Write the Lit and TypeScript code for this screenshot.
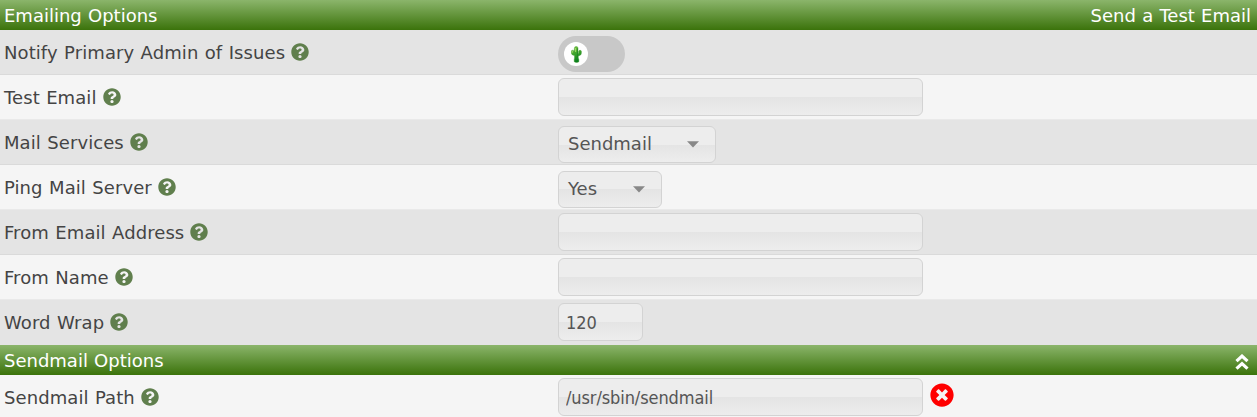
import { LitElement, html, svg, css, nothing, TemplateResult } from "lit";
import { customElement } from "lit/decorators.js";

const helpIcon = html`<svg class="help" viewBox="0 0 512 512" aria-label="Help">
  <path d="M504 256c0 137-111 248-248 248S8 393 8 256C8 119.100 119 8 256 8s248 111.100 248 248zM262.700 90c-54.500 0-89.300 23-116.500 63.800-3.500 5.300-2.400 12.400 2.700 16.300l34.700 26.300c5.200 3.900 12.600 3 16.700-2.100 17.900-22.700 30.100-35.800 57.300-35.800 20.400 0 45.700 13.100 45.700 33 0 15-12.400 22.700-32.500 34C247.100 238.500 216 254.900 216 296v4c0 6.600 5.400 12 12 12h56c6.600 0 12-5.400 12-12v-1.300c0-28.500 83.200-29.600 83.200-106.700 0-58-60.200-102-116.500-102zM256 338c-25.400 0-46 20.600-46 46s20.600 46 46 46 46-20.600 46-46-20.600-46-46-46z"/>
</svg>`;

const errorIcon = html`<svg class="error" viewBox="0 0 512 512" aria-label="Invalid path">
  <path d="M256 8C119 8 8 119 8 256s111 248 248 248 248-111 248-248S393 8 256 8zm121.600 313.100c4.700 4.700 4.700 12.300 0 17L338 377.600c-4.700 4.700-12.300 4.700-17 0L256 312l-65.100 65.600c-4.700 4.700-12.300 4.700-17 0L134.400 338c-4.700-4.700-4.700-12.300 0-17l65.600-65-65.600-65.100c-4.700-4.700-4.700-12.300 0-17l39.600-39.600c4.700-4.700 12.300-4.700 17 0l65 65.700 65.100-65.600c4.700-4.700 12.300-4.700 17 0l39.600 39.600c4.700 4.700 4.700 12.300 0 17L312 256l65.600 65.100z"/>
</svg>`;

const collapseIcon = html`<svg class="collapse" viewBox="0 0 14 16" aria-label="Collapse">
  <path d="M1.500 7.200 7 2.100l5.500 5.100M1.500 14.700 7 9.600l5.500 5.100"/>
</svg>`;

const cactus = svg`<defs>
    <linearGradient id="skin" x1="0" y1="0" x2="0.300" y2="1">
      <stop offset="0" stop-color="#7cc63c"/><stop offset=".5" stop-color="#3fa52c"/><stop offset="1" stop-color="#087f1d"/>
    </linearGradient>
  </defs>
  <path fill="url(#skin)" stroke="#3d9a2c" stroke-width=".4" d="M3.400 2.200Q3.400.4 5.200.4T7 2.200V7.600Q7.600 7.500 7.600 6.600V5.300Q7.700 4.300 9 4.300t1.400 1V7Q10.300 9.600 7.300 9.900V12q.8 1.300.6 3.700Q7 16.500 5.600 16.500T3.200 15.700q-.2-2.300.3-3.700V9.500Q.4 9.300.3 6.700V5.300Q.4 4.200 1.600 4.200t1.300 1V6.800z"/>
  <path stroke="#a3d968" stroke-width="1" fill="none" d="M4.600 2v4M1.400 5.200v1.400"/>
  <path stroke="#1c7a24" stroke-width=".6" fill="none" d="M6.500 2.500v9"/>`;

interface Setting {
  label: string;
  kind: "toggle" | "text" | "select";
  value?: string;
  size?: "small" | "mail" | "yes";
  error?: boolean;
}

const emailing: Setting[] = [
  { label: "Notify Primary Admin of Issues", kind: "toggle" },
  { label: "Test Email", kind: "text" },
  { label: "Mail Services", kind: "select", value: "Sendmail", size: "mail" },
  { label: "Ping Mail Server", kind: "select", value: "Yes", size: "yes" },
  { label: "From Email Address", kind: "text" },
  { label: "From Name", kind: "text" },
  { label: "Word Wrap", kind: "text", value: "120", size: "small" },
];

const sendmail: Setting[] = [
  { label: "Sendmail Path", kind: "text", value: "/usr/sbin/sendmail", error: true },
];

@customElement("app-root")
export class AppRoot extends LitElement {
  static styles = css`
    :host {
      display: block;
      height: 417px;
      overflow: hidden;
      background: #f5f5f5;
      color: #444;
      font: 18px/24px "DejaVu Sans", Verdana, sans-serif;
    }
    .header {
      display: flex;
      justify-content: space-between;
      align-items: center;
      box-sizing: border-box;
      height: 30px;
      padding: 1px 6px 0 4px;
      color: #fff;
      word-spacing: 0.5px;
      background: linear-gradient(#8bb56b, #3b730b);
    }
    .row {
      display: grid;
      grid-template-columns: 554px 1fr;
      box-sizing: border-box;
      height: 45px;
      padding-left: 4px;
      background: #f5f5f5;
      border-bottom: 1px solid #e9e9e9;
    }
    .row.odd { background: #e4e4e4; border-bottom-color: #dadada; }
    .row.last { border-bottom-color: #e4e4e4; }
    .label { display: flex; align-items: center; padding-top: 1px; white-space: nowrap; word-spacing: 0.6px; letter-spacing: 0.08px; }
    .help { width: 18px; height: 18px; margin: -1px 0 0 6px; fill: #607f4d; }
    .field { display: flex; align-items: flex-start; padding-top: 3px; }
    .box {
      box-sizing: border-box;
      width: 365px;
      height: 38px;
      border: 1px solid #d3d3d3;
      border-radius: 6px;
      background: linear-gradient(#ededed 0, #ededed 50%, #e4e4e4 50%, #ededed 100%);
      color: #555;
    }
    input.box {
      margin: 0;
      padding: 1px 8px 0 7px;
      outline: none;
      font: 18px "DejaVu Sans Condensed", "DejaVu Sans", sans-serif;
      font-stretch: condensed;
      letter-spacing: -0.1px;
    }
    .box.small { width: 85px; }
    .select {
      display: flex;
      align-items: center;
      justify-content: space-between;
      height: 37px;
      margin-top: 3px;
      padding: 0 16px 2px 9px;
    }
    .mail { width: 158px; }
    .yes { width: 104px; }
    .arrow { width: 12px; height: 7px; margin-top: 1px; fill: #888; }
    .toggle {
      box-sizing: border-box;
      width: 67px;
      height: 36px;
      margin-top: 3px;
      padding: 6px;
      border-radius: 18px;
      background: #c8c8c8;
    }
    .knob {
      display: grid;
      place-items: center;
      width: 24px;
      height: 24px;
      border-radius: 50%;
      background: #fff;
    }
    .cactus { width: 11px; height: 17px; }
    .error { width: 24px; height: 24px; margin: 5px 0 0 7px; fill: #f00; }
    .collapse { width: 14px; height: 16px; margin: 3px 2px 0 0; fill: none; stroke: #fff; stroke-width: 3.2; }
  `;

  private control(s: Setting): TemplateResult {
    if (s.kind === "toggle") {
      return html`<div class="toggle" role="switch" aria-checked="false">
        <div class="knob"><svg class="cactus" viewBox="0 0 11 17">${cactus}</svg></div>
      </div>`;
    }
    if (s.kind === "select") {
      return html`<div class="box select ${s.size}" role="combobox">
        <span>${s.value}</span><svg class="arrow" viewBox="0 0 12 7"><path d="M0 .3h12L6 6.500z"/></svg>
      </div>`;
    }
    return html`<input class="box ${s.size ?? ""}" type="text" .value=${s.value ?? ""} />
      ${s.error ? errorIcon : nothing}`;
  }

  private rows(list: Setting[], offset = 0) {
    return list.map(
      (s, i) => html`<div class="row ${(i + offset) % 2 === 0 ? "odd" : ""} ${s.size === "small" ? "last" : ""}">
        <div class="label"><span>${s.label}</span>${helpIcon}</div>
        <div class="field">${this.control(s)}</div>
      </div>`
    );
  }

  render() {
    return html`
      <div class="header"><span>Emailing Options</span><span>Send a Test Email</span></div>
      ${this.rows(emailing)}
      <div class="header"><span>Sendmail Options</span>${collapseIcon}</div>
      ${this.rows(sendmail, 1)}
    `;
  }
}
